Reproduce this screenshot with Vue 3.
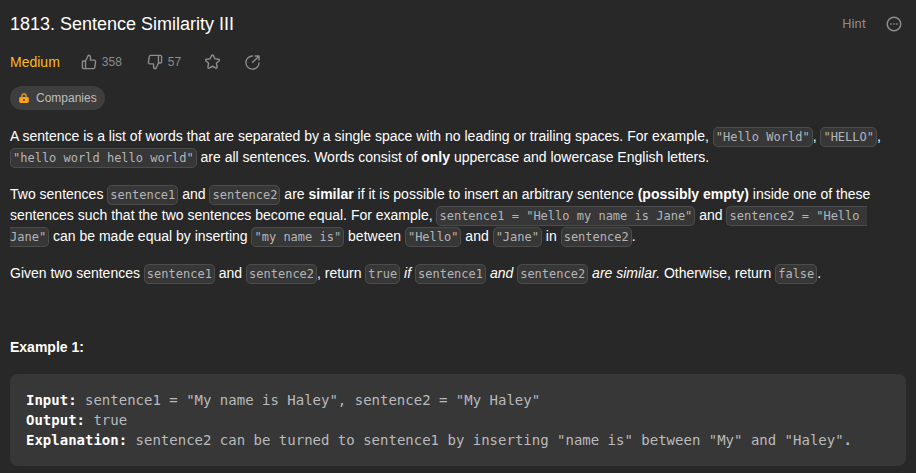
<script setup>
const upPath = 'M7 10.5H4A1.5 1.5 0 0 0 2.5 12v8A1.5 1.5 0 0 0 4 21.5h3m0-11v11m0-11 4-8.2c1.7 0 3.1 1.3 3.1 3v4h5.4a2 2 0 0 1 2 2.3l-1.2 8.1a2 2 0 0 1-2 1.8H7'
</script>

<template>
  <main class="problem">
    <header class="heading">
      <h1>1813. Sentence Similarity III</h1>
      <div class="tools">
        <span class="hint">Hint</span>
        <svg class="more" viewBox="0 0 16 16" fill="none" stroke="currentColor" stroke-width="1.5">
          <circle cx="8" cy="8" r="6.8" />
          <path d="M4.2 8h1.5M7.25 8h1.5M10.3 8h1.5" />
        </svg>
      </div>
    </header>

    <div class="stats">
      <span class="level">Medium</span>
      <span class="vote up">
        <svg class="icon" viewBox="0 0 24 24"><path :d="upPath" /></svg>358
      </span>
      <span class="vote down">
        <svg class="icon flipped" viewBox="0 0 24 24"><path :d="upPath" /></svg>57
      </span>
      <svg class="icon star" viewBox="0 0 24 24">
        <path d="M10.9 2.7a1.2 1.2 0 0 1 2.2 0l2.3 4.8 5.3.7a1.2 1.2 0 0 1 .7 2.1l-3.9 3.6 1 5.3a1.2 1.2 0 0 1-1.8 1.3L12 18l-4.7 2.5a1.2 1.2 0 0 1-1.8-1.3l1-5.3-3.9-3.6a1.2 1.2 0 0 1 .7-2.1l5.3-.7z" />
      </svg>
      <svg class="icon share" viewBox="0 0 24 24">
        <path d="M12.5 2.8A9.3 9.3 0 1 0 21.3 12M11.5 12.5 20.5 3.5M15 2.8h6.2V9" />
      </svg>
    </div>

    <div class="tags">
      <span class="chip">
        <svg class="lock" viewBox="0 0 12 12">
          <path d="M3.9 5.5V4a2.1 2.1 0 0 1 4.2 0v1.5" fill="none" stroke="currentColor" stroke-width="1.2" />
          <rect x="1.2" y="5" width="9.6" height="6" rx="1.4" fill="currentColor" />
          <circle cx="6" cy="8" r="0.9" fill="#3e3e3e" />
        </svg>Companies
      </span>
    </div>

    <section class="description">
      <p>A sentence is a list of words that are separated by a single space with no leading or trailing spaces. For example, <code>"Hello World"</code>, <code>"HELLO"</code>, <code>"hello world hello world"</code> are all sentences. Words consist of <strong>only</strong> uppercase and lowercase English letters.</p>
      <p>Two sentences <code>sentence1</code> and <code>sentence2</code> are <strong>similar</strong> if it is possible to insert an arbitrary sentence <strong>(possibly empty)</strong> inside one of these sentences such that the two sentences become equal. For example, <code>sentence1 = "Hello my name is Jane"</code> and <code>sentence2 = "Hello Jane"</code> can be made equal by inserting <code>"my name is"</code> between <code>"Hello"</code> and <code>"Jane"</code> in <code>sentence2</code>.</p>
      <p>Given two sentences <code>sentence1</code> and <code>sentence2</code>, return <code>true</code> <em>if </em><code>sentence1</code> <em>and </em><code>sentence2</code> <em>are similar.</em> Otherwise, return <code>false</code>.</p>
      <p>&nbsp;</p>
      <p><strong>Example 1:</strong></p>
      <pre><strong>Input:</strong> sentence1 = "My name is Haley", sentence2 = "My Haley"
<strong>Output:</strong> true
<strong>Explanation:</strong> sentence2 can be turned to sentence1 by inserting "name is" between "My" and "Haley"<strong class="stop">.</strong></pre>
    </section>
  </main>
</template>

<style>
body {
  background: #282828;
}
</style>

<style scoped>
.problem {
  box-sizing: border-box;
  height: 473px;
  overflow: hidden;
  padding: 12px 10px 0;
  background: #282828;
  color: #fff;
  font: 14px/21px "Liberation Sans", Arial, sans-serif;
}
.heading {
  display: flex;
  justify-content: space-between;
  align-items: center;
  height: 24px;
}
h1 {
  margin: 0;
  font-size: 18px;
  font-weight: 400;
  line-height: 24px;
}
.tools {
  display: flex;
  align-items: center;
  gap: 20px;
  padding-right: 4px;
  color: #8c8c8c;
}
.hint {
  font: 400 13px/20px Roboto, sans-serif;
}
.more {
  width: 16px;
  height: 16px;
}
.stats {
  display: flex;
  align-items: center;
  height: 20px;
  margin-top: 16px;
  color: #8c8c8c;
}
.level {
  color: #ffb81c;
  margin-right: 20px;
}
.vote {
  display: flex;
  align-items: center;
  gap: 4px;
  font-size: 12px;
}
.icon {
  width: 18px;
  height: 18px;
  fill: none;
  stroke: currentColor;
  stroke-width: 2;
  stroke-linejoin: round;
}
.vote .icon {
  box-sizing: border-box;
  padding: 0.7px;
}
.flipped {
  transform: rotate(180deg);
}
.down {
  margin-left: 24px;
}
.star {
  width: 17px;
  margin-left: 23px;
}
.share {
  width: 17px;
  height: 17px;
  margin-left: 23px;
}
.tags {
  display: flex;
  margin-top: 14px;
}
.chip {
  display: flex;
  align-items: center;
  gap: 6px;
  height: 24px;
  padding: 0 8px;
  border-radius: 12px;
  background: #3e3e3e;
  color: #bdbdbd;
  font-size: 12px;
}
.lock {
  width: 12px;
  height: 12px;
  color: #ffa116;
}
.description {
  margin-top: 16px;
}
p {
  margin: 0 0 16px;
  padding-right: 1px;
}
code {
  padding: 2px;
  border: 1px solid #4c4c4c;
  border-radius: 5px;
  background: #373737;
  color: #b4b5b7;
  font: 12px "DejaVu Sans Mono", monospace;
  white-space: pre-wrap;
}
pre {
  margin: 16px 0 0;
  padding: 16px;
  border-radius: 8px;
  background: #373737;
  color: #b9babc;
  font: 14px/20px "DejaVu Sans Mono", monospace;
  white-space: pre-wrap;
}
pre strong {
  color: #fff;
}
pre .stop {
  color: #b9babc;
}
</style>
